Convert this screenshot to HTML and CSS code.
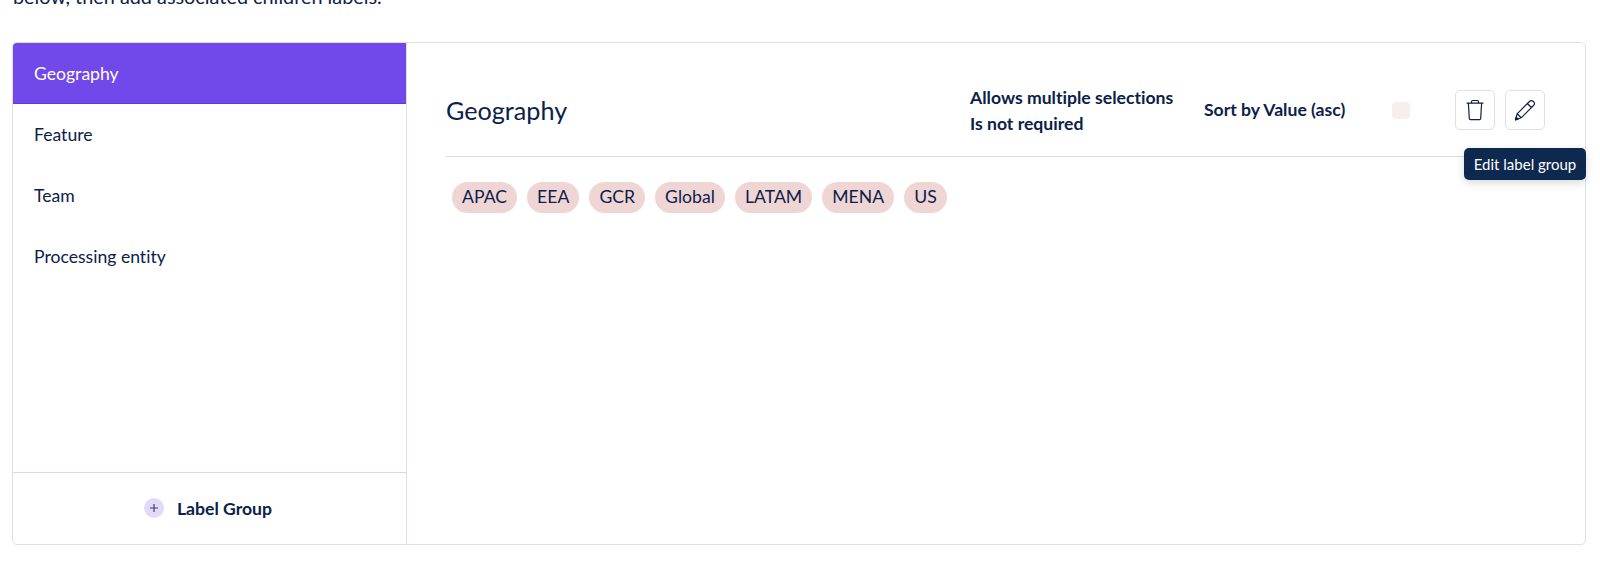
FILE: index.html
```html
<!DOCTYPE html>
<html lang="en">

<head>
    <meta charset="UTF-8">
    <meta name="viewport" content="width=device-width, initial-scale=1.0">
    <title>Label groups</title>
    <link rel="stylesheet" href="styles.css">
</head>

<body>
    <p class="intro">below, then add associated children labels.</p>

    <main class="panel">
        <aside class="sidebar">
            <nav class="group-list">
                <a class="group-item active">Geography</a>
                <a class="group-item">Feature</a>
                <a class="group-item">Team</a>
                <a class="group-item">Processing entity</a>
            </nav>
            <div class="add-group">
                <svg class="plus" viewBox="0 0 20 20">
                    <circle cx="10" cy="10" r="10" />
                    <path d="M10 6v8M6 10h8" />
                </svg>
                <span>Label Group</span>
            </div>
        </aside>

        <section class="content">
            <header class="group-header">
                <h2>Geography</h2>
                <div class="rules">
                    <div>Allows multiple selections</div>
                    <div>Is not required</div>
                </div>
                <div class="sort">Sort by Value (asc)</div>
                <span class="swatch"></span>
                <button class="icon-btn" aria-label="Delete label group">
                    <svg viewBox="0 0 24 24">
                        <path d="M3.6 5.2h16.8M8.5 5V3.7q0-1.2 1.2-1.2h4.6q1.2 0 1.2 1.2V5M5.4 5.5l.9 15q.1 1.2 1.2 1.2h9q1.1 0 1.2-1.2l.9-15" />
                    </svg>
                </button>
                <button class="icon-btn edit" aria-label="Edit">
                    <svg viewBox="0 0 24 24">
                        <path d="M2.5 21.8l1.6-6L16.4 3.5q1.9-1.9 4 0t.1 4L8.2 19.8zM14.4 5.5l4 4M4.1 15.8l4.1 4" />
                        <path class="tip" d="M2.4 21.9l.8-2.7 1.9 1.9z" />
                    </svg>
                    <span class="tooltip">Edit label group</span>
                </button>
            </header>

            <div class="labels">
                <span class="label">APAC</span>
                <span class="label">EEA</span>
                <span class="label">GCR</span>
                <span class="label">Global</span>
                <span class="label">LATAM</span>
                <span class="label">MENA</span>
                <span class="label">US</span>
            </div>
        </section>
    </main>
</body>

</html>
```
FILE: styles.css
```css
:root {
    --clr-text: #0b2149;
    --clr-purple: #7148e9;
    --clr-border: #dce0ee;
    --clr-label: #f0d5d5;
}

* {
    box-sizing: border-box;
}

body {
    margin: 0;
    height: 585px;
    overflow: hidden;
    background: #fff;
    color: var(--clr-text);
    font-family: Lato, sans-serif;
    font-size: 17.6px;
    font-variant-ligatures: none;
}

.intro {
    margin: -17px 0 32px 13px;
    line-height: 27px;
    font-size: 19.85px;
}

.panel {
    display: flex;
    width: 1574px;
    height: 503px;
    margin-left: 12px;
    border: 1px solid var(--clr-border);
    border-radius: 5px;
}

.sidebar {
    display: flex;
    flex-direction: column;
    width: 394px;
    border-right: 1px solid var(--clr-border);
}

.group-list {
    flex: 1;
}

.group-item {
    display: flex;
    align-items: center;
    height: 61px;
    padding: 0 0 1px 21px;
}

.group-item.active {
    padding-bottom: 0;
    background: var(--clr-purple);
    border-bottom: 1px solid #6535e0;
    border-top-left-radius: 4px;
    color: #fff;
}

.add-group {
    display: flex;
    align-items: center;
    justify-content: center;
    gap: 13px;
    height: 72px;
    padding: 0 3px 1px 0;
    border-top: 1px solid #d3d9ea;
    font-weight: 700;
}

.plus {
    width: 20px;
    height: 20px;
}

.plus circle {
    fill: #e3d9fb;
}

.plus path {
    stroke: #3c4567;
    stroke-width: 1.2;
}

.content {
    flex: 1;
    padding: 0 40px 0 39px;
}

.group-header {
    display: flex;
    align-items: center;
    height: 114px;
    padding-top: 21px;
    border-bottom: 1px solid #d3d9ea;
    font-weight: 700;
}

.group-header h2 {
    flex: 1;
    margin: 0 0 1px;
    font-size: 25.2px;
    font-weight: 400;
}

.rules {
    width: 234px;
    padding-top: 1px;
    line-height: 26px;
}

.sort {
    width: 188px;
    padding-bottom: 1px;
}

.swatch {
    width: 18px;
    height: 17px;
    margin-right: 45px;
    border-radius: 4px;
    background: #f9eeee;
}

.icon-btn {
    position: relative;
    display: flex;
    align-items: center;
    justify-content: center;
    width: 40px;
    height: 40px;
    padding: 0;
    border: 1px solid var(--clr-border);
    border-radius: 5px;
    background: #fff;
}

.icon-btn.edit {
    margin-left: 10px;
}

.icon-btn svg {
    width: 24px;
    height: 24px;
    fill: none;
    stroke: var(--clr-text);
    stroke-width: 1.2;
    stroke-linejoin: round;
}

.icon-btn .tip {
    fill: var(--clr-text);
}

.tooltip {
    position: absolute;
    top: 57px;
    right: -42px;
    width: 122px;
    border-radius: 5px;
    background: #0e294f;
    box-shadow: 0 3px 8px rgba(0, 0, 0, 0.15);
    color: #fff;
    font: 15px/32px Lato, sans-serif;
    text-align: center;
    white-space: nowrap;
}

.labels {
    display: flex;
    gap: 10px;
    padding: 25px 0 0 6px;
}

.label {
    padding: 0 10px 1px;
    border-radius: 16px;
    background: var(--clr-label);
    line-height: 30px;
    letter-spacing: 0.03px;
}
```
